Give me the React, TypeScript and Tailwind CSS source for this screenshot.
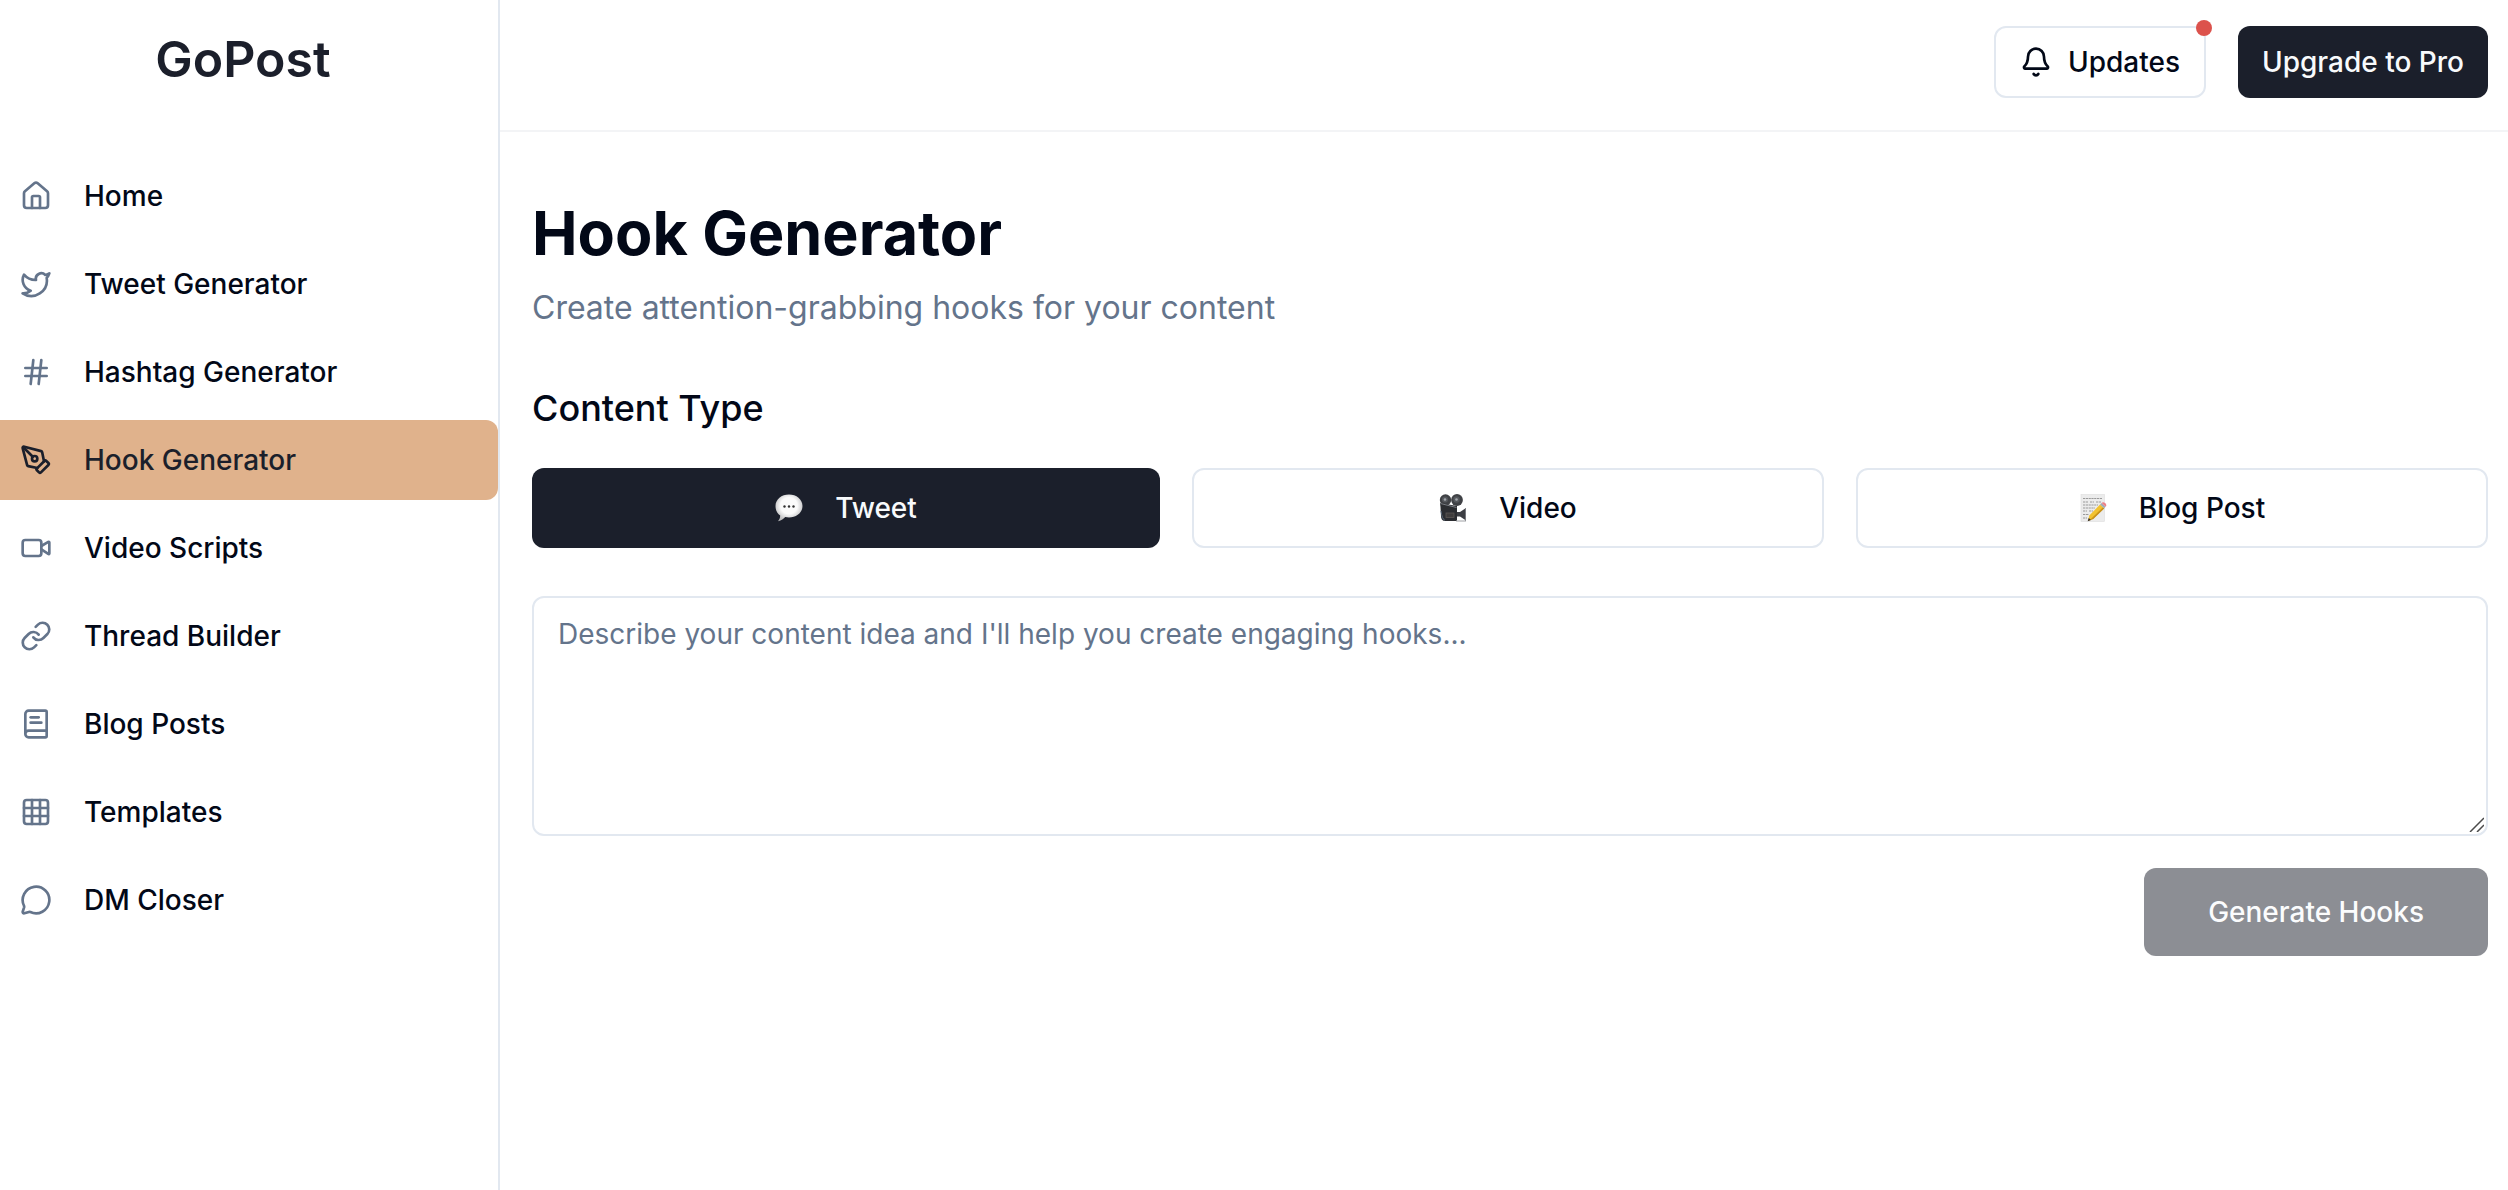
import React, { useState } from "react";
import {
  Bell,
  BookText,
  Grid3x3,
  Hash,
  House,
  Link as LinkIcon,
  MessageCircle,
  PenTool,
  Twitter,
  Video,
  type LucideIcon,
} from "lucide-react";

type NavItem = {
  href: string;
  label: string;
  icon: LucideIcon;
};

const navItems: NavItem[] = [
  { href: "#home", label: "Home", icon: House },
  { href: "#tweets", label: "Tweet Generator", icon: Twitter },
  { href: "#hashtags", label: "Hashtag Generator", icon: Hash },
  { href: "#hooks", label: "Hook Generator", icon: PenTool },
  { href: "#video", label: "Video Scripts", icon: Video },
  { href: "#threads", label: "Thread Builder", icon: LinkIcon },
  { href: "#blog", label: "Blog Posts", icon: BookText },
  { href: "#templates", label: "Templates", icon: Grid3x3 },
  { href: "#dm", label: "DM Closer", icon: MessageCircle },
];

function BubbleIcon() {
  return (
    <svg viewBox="0 0 28 28" className="size-7" aria-hidden="true">
      <defs>
        <radialGradient id="bubble" cx="0.5" cy="0.42" r="0.56">
          <stop offset="0.55" stopColor="#fbfbfb" />
          <stop offset="1" stopColor="#bdbdbf" />
        </radialGradient>
      </defs>
      <path
        d="M14 .5C6.500.5.5 5.300.5 12c0 4.600 2 7.700 4.700 9.500 0 2.500-.9 4.300-2.200 5.700 3.500-.6 5.700-2.300 7.200-4.200 1.200.3 2.500.4 3.800.4 7.500 0 13.500-4.700 13.500-11.400S21.500.5 14 .5z"
        fill="url(#bubble)"
      />
      <circle cx="9.5" cy="12.5" r="1.2" fill="#333" />
      <circle cx="14" cy="12.5" r="1.2" fill="#333" />
      <circle cx="18.5" cy="12.5" r="1.2" fill="#333" />
    </svg>
  );
}

function CameraIcon() {
  return (
    <svg viewBox="0 0 28 28" className="size-7" aria-hidden="true">
      <circle cx="6.5" cy="6" r="5.7" fill="#3f4145" />
      <circle cx="18" cy="6" r="5.9" fill="#3f4145" />
      <circle cx="6" cy="5.500" r="3" fill="#55585d" />
      <circle cx="17.5" cy="5.5" r="3.2" fill="#55585d" />
      <circle cx="6" cy="5.5" r="1.3" fill="#a4a8ad" />
      <circle cx="17.5" cy="5.5" r="1.3" fill="#a4a8ad" />
      <path d="M1 9l17 3v14q0 1-1 1H5q-3-1-3-5L1.500 13z" fill="#2b2d31" />
      <path d="M1.500 9.500l16 4" stroke="#777a80" strokeWidth="1" />
      <path d="M2 17q1 8 4 9.500" stroke="#5b6a7c" strokeWidth="1" fill="none" />
      <rect x="7" y="19" width="8" height="4.5" fill="#3f3d3d" stroke="#5c5856" strokeWidth="0.8" />
      <path d="M18 18h3l6-4v12.500l-6-4h-3z" fill="#3c3e43" />
      <path d="M26.500 14v13M17 27h10" stroke="#85888d" strokeWidth="0.8" />
    </svg>
  );
}

function MemoIcon() {
  return (
    <svg viewBox="0 0 28 28" className="size-7" aria-hidden="true">
      <rect x="2" y="0.5" width="23.5" height="27" fill="#ececec" stroke="#dedede" strokeWidth="0.6" />
      <path
        d="M4 4.500h19M4 8h5m2 0h4m2 0h5M4 11h15M4 14h12M4 17h4m2 0h4M4 20.500h6M4 24h4"
        stroke="#9a9a9a"
        strokeWidth="1"
        strokeDasharray="2.2 0.6"
      />
      <path d="M21 10.500l4 3.800L14 25l-5 2 1.300-5.400z" fill="#f2c230" />
      <path d="M24 13.300l1.300 1.200L14.300 25l-4 1.600z" fill="#c8921c" />
      <path d="M21 10.500l1.600-1.500 4 3.700-1.500 1.600z" fill="#a3abb3" />
      <path d="M22.600 9q1.600-1.600 3.600.2t.5 3.500z" fill="#ee7f86" />
      <path d="M9.700 24l-1 3.300 3.300-1.200z" fill="#39322c" />
    </svg>
  );
}

const contentTypes = [
  { id: "tweet", label: "Tweet", icon: BubbleIcon },
  { id: "video", label: "Video", icon: CameraIcon },
  { id: "blog", label: "Blog Post", icon: MemoIcon },
];

function Sidebar() {
  return (
    <aside className="flex w-[500px] shrink-0 flex-col border-r-2 border-[#e2e8f0]">
      <div className="flex justify-center pr-3">
        <a href="#home" className="text-[50px] leading-[118px] font-semibold text-[#1b1f2b]">
          GoPost
        </a>
      </div>
      <nav className="mt-[38px] flex flex-col gap-2">
        {navItems.map(({ href, label, icon: Icon }) => {
          const active = href === "#hooks";
          return (
            <a
              key={href}
              href={href}
              className={`flex h-20 items-center gap-8 rounded-r-xl px-5 text-[28px] font-medium ${
                active ? "bg-[#e0b28c] text-[#1b1f2b]" : ""
              }`}
            >
              <Icon size={32} className={active ? "" : "text-[#64748b]"} />
              {label}
            </a>
          );
        })}
      </nav>
    </aside>
  );
}

function Header() {
  return (
    <header className="flex h-[132px] items-start justify-end gap-8 border-b-2 border-gray-100 px-5 pt-[26px]">
      <button className="relative flex h-[72px] items-center gap-4 rounded-xl border-2 border-[#e2e8f0] px-6 text-[28px] font-medium">
        <Bell size={32} />
        Updates
        <span className="absolute -top-2 -right-2 size-4 rounded-full bg-[#dc524c]" />
      </button>
      <button className="h-[72px] rounded-xl bg-[#1b1f2b] px-6 text-[28px] font-medium text-[#f8fafc]">
        Upgrade to Pro
      </button>
    </header>
  );
}

export default function App() {
  const [type, setType] = useState("tweet");
  const [idea, setIdea] = useState("");

  return (
    <div className="flex min-h-screen bg-white font-['Inter',sans-serif] text-[#020817]">
      <Sidebar />
      <div className="flex min-w-0 flex-1 flex-col">
        <Header />
        <main className="flex flex-col pt-16 pr-5 pl-8">
          <h1 className="text-[61px] leading-[74px] font-bold">Hook Generator</h1>
          <p className="mt-[10px] text-[32px] leading-[56px] text-[#64748b]">
            Create attention-grabbing hooks for your content
          </p>

          <h2 className="mt-12 text-[36px] leading-[48px] font-medium">Content Type</h2>
          <div className="mt-9 flex gap-8">
            {contentTypes.map(({ id, label, icon: Icon }) => (
              <button
                key={id}
                onClick={() => setType(id)}
                className={`flex h-20 flex-1 items-center justify-center gap-8 rounded-xl text-[28px] font-medium ${
                  type === id ? "bg-[#1b1f2b] text-[#f8fafc]" : "border-2 border-[#e2e8f0]"
                }`}
              >
                <Icon />
                {label}
              </button>
            ))}
          </div>

          <div className="relative mt-12">
            <textarea
              aria-label="Content idea"
              value={idea}
              onChange={(e) => setIdea(e.target.value)}
              placeholder="Describe your content idea and I'll help you create engaging hooks..."
              className="block h-60 w-full rounded-xl border-2 border-[#e2e8f0] px-6 py-4 text-[28px] leading-10 placeholder:text-[#64748b] [&::-webkit-resizer]:hidden"
            />
            {/* resize grip */}
            <svg
              viewBox="0 0 16 16"
              className="pointer-events-none absolute right-1 bottom-1 size-4"
              stroke="#4b4b4b"
              strokeWidth="1.5"
              aria-hidden="true"
            >
              <path d="M2 16L16 2M9 16l7-7" />
            </svg>
          </div>
          <button
            disabled={!idea}
            className="mt-8 h-[88px] self-end rounded-xl bg-[#1b1f2b] px-16 text-[28px] font-medium text-[#f8fafc] disabled:opacity-50"
          >
            Generate Hooks
          </button>
        </main>
      </div>
    </div>
  );
}
